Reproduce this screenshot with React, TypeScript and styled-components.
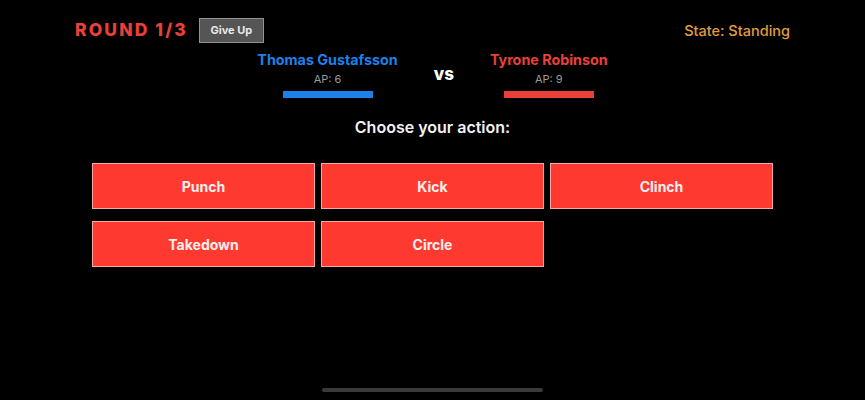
import React from "react";
import styled, { createGlobalStyle } from "styled-components";

const GlobalStyle = createGlobalStyle`
  html, body {
    margin: 0;
    padding: 0;
    background: #000;
  }
  body {
    font-family: Inter, "Noto Sans", "Liberation Sans", sans-serif;
    color: #fff;
  }
`;

const Page = styled.div`
  position: relative;
  box-sizing: border-box;
  width: 865px;
  height: 400px;
  padding: 17px 75px 0;
  background: #000;
  overflow: hidden;
`;

const TopBar = styled.div`
  display: flex;
  align-items: center;
  justify-content: space-between;
  height: 26px;
`;

const LeftGroup = styled.div`
  display: flex;
  align-items: center;
  gap: 11px;
`;

const RoundTitle = styled.div`
  font-size: 17.5px;
  font-weight: 800;
  letter-spacing: 2.1px;
  color: #e8403a;
  line-height: 20px;
`;

const GiveUpButton = styled.button`
  box-sizing: border-box;
  width: 65px;
  height: 25px;
  padding: 0;
  background: #555;
  border: 1.5px solid #929292;
  color: #e8e8e8;
  font-family: inherit;
  font-size: 11px;
  font-weight: 700;
  cursor: pointer;
`;

const StateText = styled.div`
  font-size: 14.5px;
  font-weight: 500;
  color: #e09d3e;
  line-height: 18px;
  margin-top: 2px;
`;

const Players = styled.div`
  display: flex;
  align-items: center;
  justify-content: center;
  gap: 36px;
  margin-top: 8px;
`;

const PlayerBlock = styled.div`
  display: flex;
  flex-direction: column;
  align-items: center;
`;

const PlayerName = styled.div<{ $color: string }>`
  font-size: 14.3px;
  font-weight: 700;
  line-height: 18px;
  color: ${(p) => p.$color};
`;

const ApText = styled.div`
  font-size: 11px;
  line-height: 14px;
  margin-top: 3px;
  color: #9a9a9a;
`;

const ApBar = styled.div<{ $color: string }>`
  width: 90px;
  height: 7px;
  margin-top: 5px;
  background: ${(p) => p.$color};
`;

const Versus = styled.div`
  font-size: 17px;
  font-weight: 800;
  color: #fff;
  line-height: 20px;
  margin-top: -1px;
`;

const Prompt = styled.div`
  margin-top: 19px;
  text-align: center;
  font-size: 16px;
  font-weight: 600;
  line-height: 20px;
  color: #f2f2f2;
`;

const ActionGrid = styled.div`
  display: grid;
  grid-template-columns: repeat(3, 223px);
  grid-auto-rows: 46px;
  column-gap: 6px;
  row-gap: 12px;
  justify-content: center;
  margin-top: 26px;
`;

const ActionButton = styled.button`
  box-sizing: border-box;
  background: #fe3a30;
  border: 1.5px solid #f2aaa3;
  color: #fbeeee;
  font-family: inherit;
  font-size: 14px;
  font-weight: 700;
  cursor: pointer;
  padding: 0;
`;

const HomeIndicator = styled.div`
  position: absolute;
  left: 322px;
  bottom: 8px;
  width: 221px;
  height: 4px;
  border-radius: 3px;
  background: #3b3b3b;
`;

const actions = ["Punch", "Kick", "Clinch", "Takedown", "Circle"];

const players = [
  { name: "Thomas Gustafsson", ap: 6, color: "#1f80ea" },
  { name: "Tyrone Robinson", ap: 9, color: "#ea4038" },
];

export default function App() {
  return (
    <>
      <GlobalStyle />
      <Page>
        <TopBar>
          <LeftGroup>
            <RoundTitle>ROUND 1/3</RoundTitle>
            <GiveUpButton>Give Up</GiveUpButton>
          </LeftGroup>
          <StateText>State: Standing</StateText>
        </TopBar>
        <Players>
          <PlayerBlock>
            <PlayerName $color={players[0].color}>{players[0].name}</PlayerName>
            <ApText>AP: {players[0].ap}</ApText>
            <ApBar $color={players[0].color} />
          </PlayerBlock>
          <Versus>vs</Versus>
          <PlayerBlock>
            <PlayerName $color={players[1].color}>{players[1].name}</PlayerName>
            <ApText>AP: {players[1].ap}</ApText>
            <ApBar $color={players[1].color} />
          </PlayerBlock>
        </Players>
        <Prompt>Choose your action:</Prompt>
        <ActionGrid>
          {actions.map((a) => (
            <ActionButton key={a}>{a}</ActionButton>
          ))}
        </ActionGrid>
        <HomeIndicator />
      </Page>
    </>
  );
}
